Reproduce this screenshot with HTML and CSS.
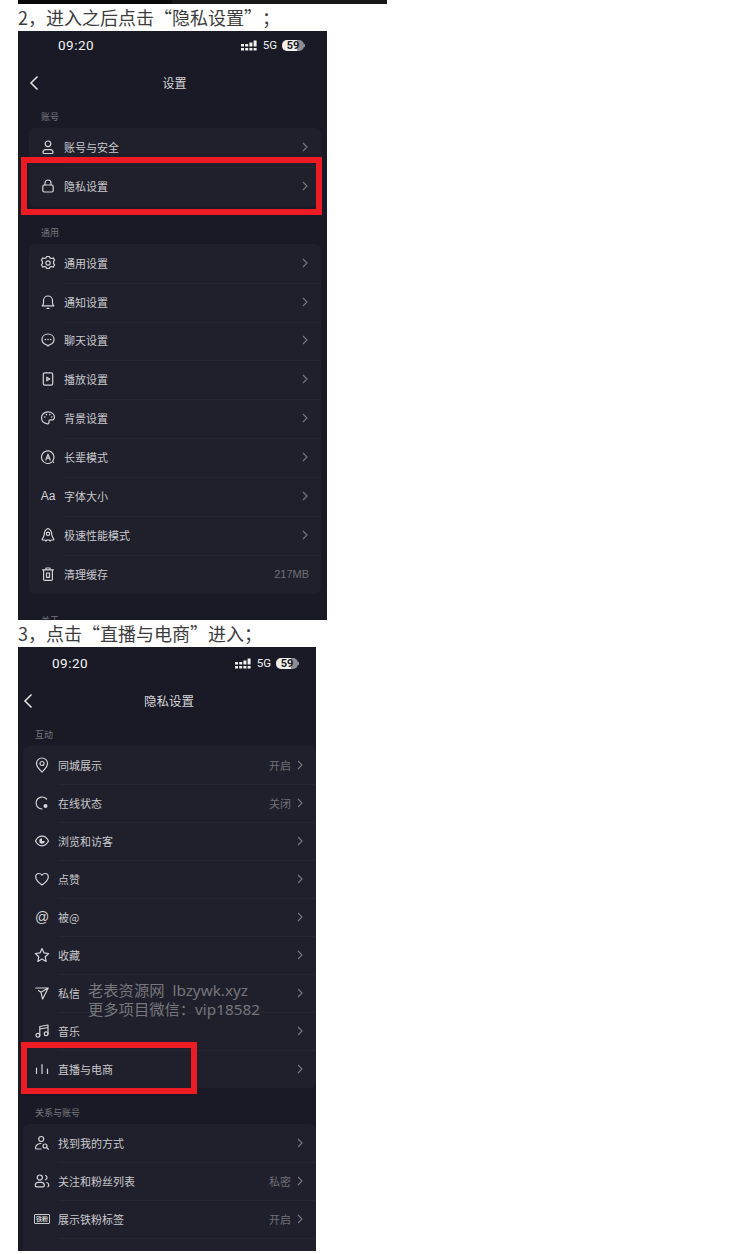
FILE: index.html
```html
<!DOCTYPE html>
<html lang="zh-CN">

<head>
   <meta charset="UTF-8">
   <meta name="viewport" content="width=device-width, initial-scale=1.0">
   <title>隐私设置</title>
   <link rel="stylesheet" href="styles.css">
</head>

<body>
   <div class="top-bar"><span></span></div>

   <p class="step">2，进入之后点击“隐私设置”；</p>
   <section class="phone phone-a">
      <div class="status">
         <span class="time">09:20</span>
         <div class="status-right">
            <svg class="signal" width="17" height="11" viewBox="0 0 17 11"><path d="M0 4h3v2.600H0zM0 8h3v2.600H0zM4.200 4h3v2.600h-3zM4.200 8h3v2.600h-3zM8.400 2.500h3v4.100h-3zM8.400 8h3v2.600h-3zM12.600.5h3v6.100h-3zM12.600 8h3v2.600h-3z"/></svg>
            <span class="net">5G</span>
            <span class="battery">59</span>
         </div>
      </div>
      <div class="nav">
         <svg class="back" width="10" height="16" viewBox="0 0 10 16"><path d="M8.500 1.500 2 8l6.500 6.500"/></svg>
         <span>设置</span>
      </div>

      <div class="label">账号</div>
      <div class="card">
         <div class="row">
            <svg class="ico" viewBox="0 0 16 16"><circle cx="8" cy="4.800" r="2.800"/><path d="M3 13.600c0-2 1.200-3 2.600-3h4.800c1.400 0 2.600 1 2.600 3 0 .6-.4.9-1 .9H4c-.6 0-1-.3-1-.9z"/></svg>
            <span class="name">账号与安全</span>
            <svg class="arrow" viewBox="0 0 6 10"><path d="m1 1 4 4-4 4"/></svg>
         </div>
         <div class="row">
            <svg class="ico" viewBox="0 0 16 16"><rect x="2.800" y="7" width="10.400" height="7" rx="1.400"/><path d="M5 7V5a3 3 0 0 1 6 0v2"/></svg>
            <span class="name">隐私设置</span>
            <svg class="arrow" viewBox="0 0 6 10"><path d="m1 1 4 4-4 4"/></svg>
         </div>
      </div>

      <div class="label">通用</div>
      <div class="card">
         <div class="row">
            <svg class="ico" viewBox="0 0 16 16"><path d="M6.600 1.500h2.800l.7 1.700 1.800.3 1.400-.7 1.300 2.400-1.100 1.400v1.800l1.100 1.400-1.300 2.400-1.400-.7-1.800.3-.7 1.700H6.600l-.7-1.700-1.800-.3-1.400.7-1.300-2.400 1.100-1.400V6.600L1.400 5.200l1.300-2.400 1.400.7 1.800-.3z"/><circle cx="8" cy="8" r="2.200"/></svg>
            <span class="name">通用设置</span>
            <svg class="arrow" viewBox="0 0 6 10"><path d="m1 1 4 4-4 4"/></svg>
         </div>
         <div class="row">
            <svg class="ico" viewBox="0 0 16 16"><path d="M2.200 11.800c1-.8 1.300-1.600 1.300-3V6.500a4.500 4.500 0 0 1 9 0v2.300c0 1.400.3 2.200 1.300 3z"/><path d="M7 14.300h2"/></svg>
            <span class="name">通知设置</span>
            <svg class="arrow" viewBox="0 0 6 10"><path d="m1 1 4 4-4 4"/></svg>
         </div>
         <div class="row">
            <svg class="ico" viewBox="0 0 16 16"><path d="M8 2c3.600 0 6 2.400 6 5.400s-2.400 5.300-4.800 5.500L8 14.200l-1.200-1.300C4.400 12.700 2 10.400 2 7.400S4.400 2 8 2z"/><path class="dots" d="M5.300 7.500h.01M8 7.500h.01M10.700 7.500h.01"/></svg>
            <span class="name">聊天设置</span>
            <svg class="arrow" viewBox="0 0 6 10"><path d="m1 1 4 4-4 4"/></svg>
         </div>
         <div class="row">
            <svg class="ico" viewBox="0 0 16 16"><rect x="3.300" y="1.800" width="9.400" height="12.400" rx="1.600"/><path d="M6.800 6.200v3.600L9.800 8z"/></svg>
            <span class="name">播放设置</span>
            <svg class="arrow" viewBox="0 0 6 10"><path d="m1 1 4 4-4 4"/></svg>
         </div>
         <div class="row">
            <svg class="ico" viewBox="0 0 16 16"><path d="M8 1.800c3.600 0 6.500 2.400 6.500 5.400 0 2.200-1.700 2.900-3.300 2.700-1.500-.2-2.700.5-2.300 2 .3 1.300-.3 2.300-1.500 2C4 13.300 1.500 11 1.500 7.800 1.500 4.400 4.400 1.800 8 1.800z"/><path class="dots" d="M4.800 7h.01M6.500 4.600h.01M9.800 4.600h.01M11.800 7h.01"/></svg>
            <span class="name">背景设置</span>
            <svg class="arrow" viewBox="0 0 6 10"><path d="m1 1 4 4-4 4"/></svg>
         </div>
         <div class="row">
            <svg class="ico" viewBox="0 0 16 16"><path d="M11.500 13.200A6.300 6.300 0 1 1 14 8c0 1.600-.5 3-1.400 4.200l1 1.300"/><path d="M5.800 11 8 5.200 10.200 11M6.600 9.200h2.800"/></svg>
            <span class="name">长辈模式</span>
            <svg class="arrow" viewBox="0 0 6 10"><path d="m1 1 4 4-4 4"/></svg>
         </div>
         <div class="row">
            <span class="ico-text">Aa</span>
            <span class="name">字体大小</span>
            <svg class="arrow" viewBox="0 0 6 10"><path d="m1 1 4 4-4 4"/></svg>
         </div>
         <div class="row">
            <svg class="ico" viewBox="0 0 16 16"><path d="M8 1.500c2.500 1 3.800 3.400 3.800 6.200 0 1 .9 2.600 1.900 4.300.3.600 0 1-.6 1h-2l-.8 1-1.100-1H6.800l-1.100 1-.8-1h-2c-.6 0-.9-.4-.6-1 1-1.700 1.900-3.300 1.900-4.300 0-2.800 1.300-5.200 3.800-6.200z"/><circle cx="8" cy="6.800" r="1.700"/></svg>
            <span class="name">极速性能模式</span>
            <svg class="arrow" viewBox="0 0 6 10"><path d="m1 1 4 4-4 4"/></svg>
         </div>
         <div class="row">
            <svg class="ico" viewBox="0 0 16 16"><path d="M2.500 3.800h11M6 3.800V2h4v1.800M3.600 3.800v9.400c0 .7.500 1.100 1.100 1.100h6.600c.6 0 1.100-.4 1.100-1.100V3.800M6.500 7v4.300h3V7z"/></svg>
            <span class="name">清理缓存</span>
            <span class="value value-end">217MB</span>
         </div>
      </div>

      <div class="label">关于</div>
      <div class="mark mark-a"></div>
   </section>

   <p class="step">3，点击“直播与电商”进入；</p>
   <section class="phone phone-b">
      <div class="status">
         <span class="time">09:20</span>
         <div class="status-right">
            <svg class="signal" width="17" height="11" viewBox="0 0 17 11"><path d="M0 4h3v2.600H0zM0 8h3v2.600H0zM4.200 4h3v2.600h-3zM4.200 8h3v2.600h-3zM8.400 2.500h3v4.100h-3zM8.400 8h3v2.600h-3zM12.600.5h3v6.100h-3zM12.600 8h3v2.600h-3z"/></svg>
            <span class="net">5G</span>
            <span class="battery">59</span>
         </div>
      </div>
      <div class="nav">
         <svg class="back" width="10" height="16" viewBox="0 0 10 16"><path d="M8.500 1.500 2 8l6.500 6.500"/></svg>
         <span>隐私设置</span>
      </div>

      <div class="label">互动</div>
      <div class="card">
         <div class="row">
            <svg class="ico" viewBox="0 0 16 16"><path d="M8 15c-1-1.200-5.500-4.700-5.500-8.500a5.500 5.500 0 0 1 11 0C13.500 10.300 9 13.800 8 15z"/><circle cx="8" cy="6.500" r="2"/></svg>
            <span class="name">同城展示</span>
            <span class="value">开启</span>
            <svg class="arrow" viewBox="0 0 6 10"><path d="m1 1 4 4-4 4"/></svg>
         </div>
         <div class="row">
            <svg class="ico" viewBox="0 0 16 16"><path d="M12.500 4A6 6 0 1 0 8 14"/><circle class="solid" cx="11.500" cy="11" r="2"/></svg>
            <span class="name">在线状态</span>
            <span class="value">关闭</span>
            <svg class="arrow" viewBox="0 0 6 10"><path d="m1 1 4 4-4 4"/></svg>
         </div>
         <div class="row">
            <svg class="ico" viewBox="0 0 16 16"><path d="M1.500 8C3 4.900 5.200 3.200 8 3.200s5 1.700 6.500 4.800c-1.500 3.100-3.700 4.800-6.500 4.800S3 11.100 1.500 8z"/><path class="solid" d="M8 5.300A2.700 2.700 0 1 0 10.700 8H8z"/></svg>
            <span class="name">浏览和访客</span>
            <svg class="arrow" viewBox="0 0 6 10"><path d="m1 1 4 4-4 4"/></svg>
         </div>
         <div class="row">
            <svg class="ico" viewBox="0 0 16 16"><path d="M8 14C5 11.800 1.700 9.300 1.700 5.900 1.700 3.800 3.300 2.500 5 2.500c1.300 0 2.300.6 3 1.700.7-1.100 1.700-1.700 3-1.700 1.700 0 3.300 1.300 3.300 3.400C14.300 9.300 11 11.800 8 14z"/></svg>
            <span class="name">点赞</span>
            <svg class="arrow" viewBox="0 0 6 10"><path d="m1 1 4 4-4 4"/></svg>
         </div>
         <div class="row">
            <span class="ico-text ico-at">@</span>
            <span class="name">被@</span>
            <svg class="arrow" viewBox="0 0 6 10"><path d="m1 1 4 4-4 4"/></svg>
         </div>
         <div class="row">
            <svg class="ico" viewBox="0 0 16 16"><path d="m8 1.500 2 4.400 4.700.6-3.500 3.200.9 4.700L8 12.100l-4.100 2.300.9-4.700L1.300 6.500 6 5.900z"/></svg>
            <span class="name">收藏</span>
            <svg class="arrow" viewBox="0 0 6 10"><path d="m1 1 4 4-4 4"/></svg>
         </div>
         <div class="row">
            <svg class="ico" viewBox="0 0 16 16"><path d="M1.800 3h12.400L8.600 14 7 7.300 4.500 5.500M7 7.300l7.200-4.300"/></svg>
            <span class="name">私信</span>
            <svg class="arrow" viewBox="0 0 6 10"><path d="m1 1 4 4-4 4"/></svg>
         </div>
         <div class="row">
            <svg class="ico" viewBox="0 0 16 16"><path d="M5.800 12.300V3.500L14 2v8.700M5.800 6l8.200-1.500"/><circle cx="3.900" cy="12.300" r="1.900"/><circle cx="12.100" cy="10.700" r="1.900"/></svg>
            <span class="name">音乐</span>
            <svg class="arrow" viewBox="0 0 6 10"><path d="m1 1 4 4-4 4"/></svg>
         </div>
         <div class="row">
            <svg class="ico" viewBox="0 0 16 16"><path d="M2.500 7v5.500M8 3.500v9M13.500 8v4.500"/></svg>
            <span class="name">直播与电商</span>
            <svg class="arrow" viewBox="0 0 6 10"><path d="m1 1 4 4-4 4"/></svg>
         </div>
      </div>

      <div class="label">关系与账号</div>
      <div class="card">
         <div class="row">
            <svg class="ico" viewBox="0 0 16 16"><circle cx="7.200" cy="4" r="2.500"/><path d="M7 8.500c-3 0-5.500 2-5.500 4.500 0 .6.300 1 1 1H7"/><circle cx="11" cy="11" r="2"/><path d="m12.500 12.500 2 1.700"/></svg>
            <span class="name">找到我的方式</span>
            <svg class="arrow" viewBox="0 0 6 10"><path d="m1 1 4 4-4 4"/></svg>
         </div>
         <div class="row">
            <svg class="ico" viewBox="0 0 16 16"><circle cx="5.800" cy="4.600" r="2.600"/><path d="M1.300 12.400c0-1.900 1.300-3 2.900-3h3.200c1.600 0 2.900 1.100 2.900 3 0 1-.6 1.400-1.300 1.400H2.600c-.7 0-1.300-.4-1.300-1.400zM11.500 2.500a2.200 2.200 0 0 1 0 4.200M12.800 9.500c1.300.4 2 1.500 2 2.800 0 .7-.3 1.200-.9 1.400"/></svg>
            <span class="name">关注和粉丝列表</span>
            <span class="value">私密</span>
            <svg class="arrow" viewBox="0 0 6 10"><path d="m1 1 4 4-4 4"/></svg>
         </div>
         <div class="row">
            <span class="ico-badge">铁粉</span>
            <span class="name">展示铁粉标签</span>
            <span class="value">开启</span>
            <svg class="arrow" viewBox="0 0 6 10"><path d="m1 1 4 4-4 4"/></svg>
         </div>
         <div class="row"></div>
      </div>

      <div class="watermark">老表资源网&nbsp; lbzywk.xyz<br>更多项目微信：vip18582</div>
      <div class="mark mark-b"></div>
   </section>
</body>

</html>
```
FILE: styles.css
```css
* {
   margin: 0;
   padding: 0;
   box-sizing: border-box;
}

body {
   background: #fff;
   padding-left: 18px;
   font-family: "Noto Sans CJK SC", sans-serif;
}

.top-bar {
   width: 369px;
   height: 4px;
   background: #171717;
}

.top-bar span {
   display: block;
   width: 154px;
   height: 4px;
   background: #0a0a0a;
}

.step {
   height: 27px;
   line-height: 27px;
   font-size: 18px;
   color: #3c3c3c;
   white-space: nowrap;
   text-spacing-trim: space-all;
}

.phone {
   position: relative;
   overflow: hidden;
   background: #191a25;
   color: #c9c9cd;
}

.phone-a {
   width: 309px;
   height: 589px;
   --row: 38.875px;
   --side: 11px;
   --right: 6px;
}

.phone-b {
   width: 298px;
   height: 604px;
   --row: 38px;
   --side: 5px;
   --right: 0px;
}

/* status bar */
.status {
   display: flex;
   align-items: center;
   justify-content: space-between;
   height: 28px;
   padding: 0 23px 0 40px;
   color: #f2f2f2;
}

.phone-b .status {
   height: 32px;
   padding: 0 18px 0 34px;
}

.time {
   font-family: Roboto, sans-serif;
   font-size: 13.5px;
   letter-spacing: 0.5px;
}

.status-right {
   display: flex;
   align-items: center;
   gap: 5px;
}

.signal {
   fill: #f0f0f0;
}

.net {
   font-family: Roboto, sans-serif;
   font-size: 11.5px;
}

.battery {
   position: relative;
   width: 22px;
   height: 11px;
   border-radius: 5px;
   background: linear-gradient(to right, #f0f0f0 68%, #8d8d92 68%);
   color: #1a1a20;
   font-family: Roboto, sans-serif;
   font-size: 11px;
   font-weight: 700;
   line-height: 11px;
   text-align: center;
}

.battery::after {
   content: "";
   position: absolute;
   left: 22px;
   top: 4px;
   width: 1px;
   height: 3px;
   background: #8d8d92;
}

/* title row */
.nav {
   position: relative;
   display: flex;
   align-items: center;
   justify-content: center;
   height: 48px;
   margin-bottom: 1px;
   padding: 0 0 2px 4px;
   font-size: 12px;
   color: #d6d6d9;
}

.phone-b .nav {
   height: 44px;
   margin-bottom: 3px;
   font-size: 12.5px;
}

.back {
   position: absolute;
   left: 11px;
   top: 16px;
   fill: none;
   stroke: #e6e6e6;
   stroke-width: 1.5;
}

.phone-b .back {
   left: 5px;
   top: 14px;
}

.label {
   height: 16px;
   line-height: 18px;
   margin: 18px 0 4px calc(var(--side) + 12px);
   font-size: 9px;
   color: #77787f;
}

.phone-b .label {
   margin-top: 16px;
}

.phone .nav + .label {
   margin-top: 0;
}

.card {
   margin: 0 var(--right) 0 var(--side);
   background: #1f202b;
   border-radius: 6px;
}

.row {
   position: relative;
   display: flex;
   align-items: center;
   height: var(--row);
   padding: 0 13px 0 11px;
   font-size: 11px;
}

.phone-a .row {
   padding-bottom: 1px;
}

/* divider starts under the text */
.row + .row::before {
   content: "";
   position: absolute;
   top: 0;
   left: 35px;
   right: 0;
   height: 1px;
   background: #262732;
}

.ico {
   flex: none;
   width: 16px;
   height: 16px;
   margin-right: 8px;
   fill: none;
   stroke: #d4d4d8;
   stroke-width: 1.2;
   stroke-linejoin: round;
   stroke-linecap: round;
}

.ico .dots {
   stroke-width: 1.6;
}

.ico .solid {
   fill: #d4d4d8;
   stroke: none;
}

.ico-text {
   flex: none;
   width: 16px;
   margin-right: 8px;
   font-family: "Liberation Sans", sans-serif;
   font-size: 12px;
   text-align: center;
   white-space: nowrap;
   color: #d4d4d8;
}

.ico-at {
   font-size: 14px;
}

.ico-badge {
   flex: none;
   width: 16px;
   height: 10px;
   margin-right: 8px;
   border: 1px solid #c9c9cd;
   border-radius: 1px;
   font-size: 6px;
   font-weight: 700;
   line-height: 8px;
   text-align: center;
   white-space: nowrap;
}

.name {
   flex: none;
}

/* whatever follows the name is pushed to the right edge */
.name + * {
   margin-left: auto;
}

.value {
   color: #6f7077;
   margin-right: 6px;
}

.value-end {
   margin-right: -1px;
   font-family: "Liberation Sans", sans-serif;
}

.arrow {
   flex: none;
   width: 6px;
   height: 10px;
   fill: none;
   stroke: #77787f;
   stroke-width: 1.1;
}

/* red highlight boxes drawn over the screenshot */
.mark {
   position: absolute;
   border: 6px solid #ed1c24;
}

.mark-a {
   left: 3px;
   top: 126px;
   width: 301px;
   height: 58px;
}

.mark-b {
   left: 3px;
   top: 395px;
   width: 176px;
   height: 52px;
}

.watermark {
   position: absolute;
   left: 70px;
   top: 334px;
   font-family: "Noto Sans", "Noto Sans CJK SC", sans-serif;
   font-size: 15.3px;
   line-height: 19px;
   color: #76767c;
   white-space: nowrap;
}
```
